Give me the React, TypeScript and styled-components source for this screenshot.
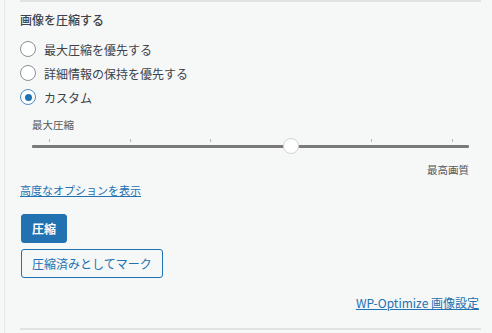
import React from 'react'
import styled, { createGlobalStyle } from 'styled-components'

const GlobalStyle = createGlobalStyle`
  html, body {
    margin: 0;
    padding: 0;
    background: #f6f7f7;
  }
  body {
    font-family: "Noto Sans CJK JP", "Noto Sans", sans-serif;
    color: #3c434a;
  }
`

const Frame = styled.div`
  margin-left: 4px;
  border-left: 1px solid #e6e6e6;
  height: 333px;
  box-sizing: border-box;
  padding: 0 11px 0 15px;
`

const Section = styled.div`
  border-top: 2px solid #e2e2e2;
  border-bottom: 2px solid #e2e2e2;
  height: 330px;
  box-sizing: border-box;
  display: flex;
  flex-direction: column;
`

const Title = styled.h3`
  margin: 9px 0 0;
  font-size: 12px;
  line-height: 18px;
  font-weight: 500;
  color: #3c434a;
`

const RadioList = styled.div`
  margin-top: 8px;
  display: flex;
  flex-direction: column;
`

const RadioRow = styled.label`
  display: flex;
  align-items: center;
  height: 24px;
  font-size: 12px;
  color: #3c434a;
`

const RadioCircle = styled.span<{ checked?: boolean }>`
  width: 16px;
  height: 16px;
  box-sizing: border-box;
  border-radius: 50%;
  border: 1px solid ${p => (p.checked ? '#4f8fc4' : '#8c8f94')};
  background: #fff;
  margin: 0 8px 0 0;
  display: flex;
  align-items: center;
  justify-content: center;
  &::after {
    content: '';
    display: ${p => (p.checked ? 'block' : 'none')};
    width: 7px;
    height: 7px;
    border-radius: 50%;
    background: #2271b1;
  }
`

const SliderBlock = styled.div`
  margin: 8px 12px 0 12px;
  display: flex;
  flex-direction: column;
`

const SmallLabel = styled.div<{ right?: boolean }>`
  font-size: 10.5px;
  line-height: 16px;
  color: #50575e;
  text-align: ${p => (p.right ? 'right' : 'left')};
`

const SliderTrack = styled.div`
  position: relative;
  height: 28px;
  margin-top: 1px;
`

const Ticks = styled.div`
  display: flex;
  justify-content: space-between;
  padding: 0 16px 0 17px;
  height: 8px;
  align-items: flex-end;
`

const Tick = styled.span`
  width: 1px;
  height: 3px;
  background: #b5b5b5;
`

const Bar = styled.div`
  height: 3px;
  background: #7a7a7a;
  border-radius: 1px;
  margin-top: 3px;
`

const Thumb = styled.span`
  position: absolute;
  top: 4px;
  width: 16px;
  height: 16px;
  box-sizing: border-box;
  border-radius: 50%;
  background: #fff;
  border: 1px solid #d4d4d4;
  transform: translateX(-50%);
`

const Link = styled.a`
  color: #2271b1;
  text-decoration: underline;
  font-size: 11px;
  line-height: 16px;
  cursor: pointer;
`

const AdvancedLink = styled(Link)`
  margin-top: 4px;
  align-self: flex-start;
`

const Buttons = styled.div`
  margin-top: 16px;
  display: flex;
  flex-direction: column;
  align-items: flex-start;
  gap: 6px;
  padding-left: 1px;
`

const Button = styled.button<{ primary?: boolean }>`
  height: 29px;
  box-sizing: border-box;
  padding: 0 10px;
  font-family: inherit;
  font-size: 12px;
  border-radius: 3px;
  border: 1px solid #2271b1;
  background: ${p => (p.primary ? '#2271b1' : '#f6f7f7')};
  color: ${p => (p.primary ? '#fff' : '#2271b1')};
  font-weight: ${p => (p.primary ? 600 : 400)};
  cursor: pointer;
`

const Footer = styled.div`
  margin-top: 16px;
  display: flex;
  justify-content: flex-end;
  padding-right: 2px;
`

const SettingsLink = styled(Link)`
  font-size: 12px;
  line-height: 18px;
`

const options = [
  { label: '最大圧縮を優先する', checked: false },
  { label: '詳細情報の保持を優先する', checked: false },
  { label: 'カスタム', checked: true },
]

export default function App() {
  const thumbPos = 59.2
  return (
    <>
      <GlobalStyle />
      <Frame>
        <Section>
          <Title>画像を圧縮する</Title>
          <RadioList>
            {options.map(o => (
              <RadioRow key={o.label}>
                <RadioCircle checked={o.checked} />
                {o.label}
              </RadioRow>
            ))}
          </RadioList>

          <SliderBlock>
            <SmallLabel>最大圧縮</SmallLabel>
            <SliderTrack>
              <Ticks>
                {Array.from({ length: 6 }).map((_, i) => (
                  <Tick key={i} />
                ))}
              </Ticks>
              <Bar />
              <Thumb style={{ left: `${thumbPos}%` }} />
            </SliderTrack>
            <SmallLabel right>最高画質</SmallLabel>
          </SliderBlock>

          <AdvancedLink>高度なオプションを表示</AdvancedLink>

          <Buttons>
            <Button primary>圧縮</Button>
            <Button>圧縮済みとしてマーク</Button>
          </Buttons>

          <Footer>
            <SettingsLink>WP-Optimize 画像設定</SettingsLink>
          </Footer>
        </Section>
      </Frame>
    </>
  )
}
